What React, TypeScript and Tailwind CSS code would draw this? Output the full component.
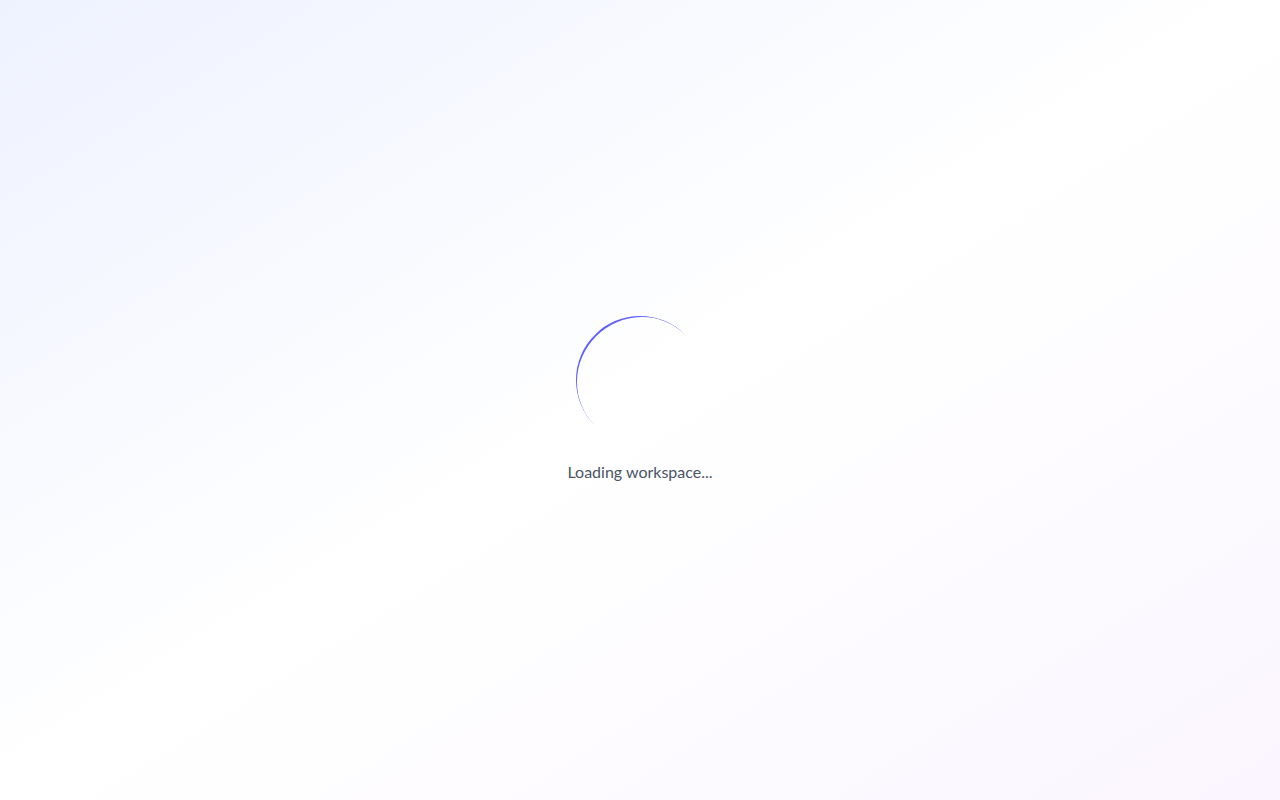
import React from "react";

export default function App() {
  return (
    <div
      className="min-h-screen w-full flex items-center justify-center bg-gradient-to-br from-indigo-50 via-white to-purple-50"
      style={{ fontFamily: 'Lato, "Noto Sans", sans-serif' }}
    >
      <div className="flex flex-col items-center">
        <div className="h-32 w-32 rounded-full border-b-2 border-indigo-500 rotate-[135deg]" />
        <p className="mt-4 text-base text-gray-600">Loading workspace...</p>
      </div>
    </div>
  );
}
